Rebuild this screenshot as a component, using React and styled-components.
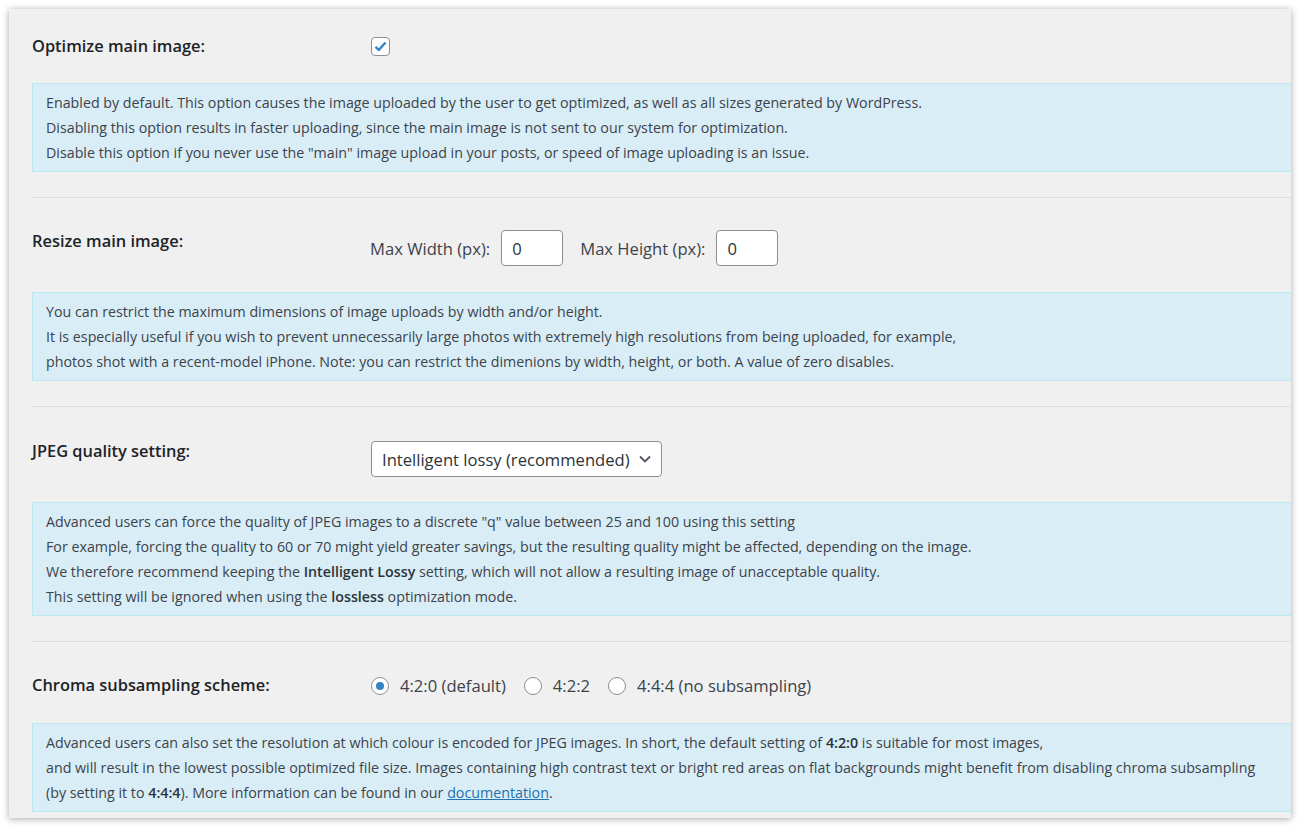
import React from 'react';
import styled, { createGlobalStyle } from 'styled-components';

const GlobalStyle = createGlobalStyle`
  html, body {
    margin: 0;
    background: #ffffff;
  }
  body {
    font-family: "Open Sans", "Noto Sans", sans-serif;
    color: #3c434a;
  }
  * {
    box-sizing: border-box;
  }
`;

const Page = styled.div`
  width: 1299px;
  height: 827px;
  padding: 9px 8px 9px 9px;
`;

const Panel = styled.div`
  height: 100%;
  background: #f0f0f1;
  box-shadow: 0 1px 7px rgba(0, 0, 0, 0.35);
  overflow: hidden;
  padding-left: 23px;
`;

const Section = styled.section`
  padding-top: ${({ $top = 32 }) => $top}px;
  padding-bottom: 25px;
  border-top: ${({ $first }) => ($first ? 'none' : '1px solid #dcdcde')};
  margin-right: -30px;
`;

const Row = styled.div`
  display: flex;
  align-items: flex-start;
`;

const Label = styled.div`
  width: 339px;
  flex-shrink: 0;
  font-size: 16.4px;
  font-weight: 600;
  line-height: 22px;
  color: #1d2327;
`;

const Controls = styled.div`
  display: flex;
  align-items: center;
  min-height: 22px;
  font-size: 16.6px;
  color: #3c434a;
`;

const FieldLabel = styled.span`
  margin-right: 11px;
  margin-left: -1px;
`;

const NumberInput = styled.input`
  width: 62px;
  height: 36px;
  padding: 0 10px;
  margin-right: 18px;
  border: 1px solid #8c8f94;
  border-radius: 4px;
  background: #fff;
  font: inherit;
  color: #2c3338;
  outline: 0;
`;

const CheckBox = styled.span`
  width: 19px;
  height: 19px;
  border: 1px solid #8c8f94;
  border-radius: 4px;
  background: #fff;
  display: flex;
  align-items: center;
  justify-content: center;
  margin-top: 1px;
`;

const SelectWrap = styled.div`
  position: relative;
  width: 291px;
  height: 36px;
  margin-top: 1px;
  border: 1px solid #8c8f94;
  border-radius: 4px;
  background: #fff;
  display: flex;
  align-items: center;
  padding-left: 10px;
  color: #2c3338;

  svg {
    position: absolute;
    right: 9px;
    top: 10px;
  }
`;

const RadioOption = styled.label`
  display: flex;
  align-items: center;
  margin-right: 18px;
  color: #3c434a;
`;

const Radio = styled.span`
  width: 18px;
  height: 18px;
  border-radius: 50%;
  border: 1px solid #8c8f94;
  background: #fff;
  margin-right: 11px;
  display: flex;
  align-items: center;
  justify-content: center;

  &::after {
    content: '';
    width: 8px;
    height: 8px;
    border-radius: 50%;
    background: ${({ $checked }) => ($checked ? '#3582c4' : 'transparent')};
  }
`;

const Info = styled.div`
  margin-top: ${({ $gap = 26 }) => $gap}px;
  padding: 6px 13px;
  background: #d9edf7;
  border: 1px solid #bce8f1;
  font-size: 14.25px;
  line-height: 25px;
  color: #3c434a;
  white-space: nowrap;

  b {
    font-weight: 600;
    color: #2c3338;
  }

  a {
    color: #2271b1;
    text-decoration: underline;
  }
`;

const Chevron = () => (
  <svg width="14" height="14" viewBox="0 0 14 14" fill="none">
    <path d="M2 4.5 7 9.5 12 4.5" stroke="#50575e" strokeWidth="1.9" />
  </svg>
);

const Check = () => (
  <svg width="15" height="15" viewBox="0 0 15 15" fill="none">
    <path d="M2.5 7.8 5.8 11 12.5 3.5" stroke="#3582c4" strokeWidth="2.4" strokeLinejoin="round" />
  </svg>
);

const App = () => {
  return (
    <Page>
      <GlobalStyle />
      <Panel>
        <Section $first $top={26}>
          <Row>
            <Label>Optimize main image:</Label>
            <Controls>
              <CheckBox role="checkbox" aria-checked="true">
                <Check />
              </CheckBox>
            </Controls>
          </Row>
          <Info>
            Enabled by default. This option causes the image uploaded by the user to get optimized, as well as all sizes generated by WordPress.
            <br />
            Disabling this option results in faster uploading, since the main image is not sent to our system for optimization.
            <br />
            Disable this option if you never use the "main" image upload in your posts, or speed of image uploading is an issue.
          </Info>
        </Section>

        <Section>
          <Row>
            <Label>Resize main image:</Label>
            <Controls>
              <FieldLabel>Max Width (px):</FieldLabel>
              <NumberInput defaultValue="0" />
              <FieldLabel>Max Height (px):</FieldLabel>
              <NumberInput defaultValue="0" />
            </Controls>
          </Row>
          <Info>
            You can restrict the maximum dimensions of image uploads by width and/or height.
            <br />
            It is especially useful if you wish to prevent unnecessarily large photos with extremely high resolutions from being uploaded, for example,
            <br />
            photos shot with a recent-model iPhone. Note: you can restrict the dimenions by width, height, or both. A value of zero disables.
          </Info>
        </Section>

        <Section $top={33}>
          <Row>
            <Label>JPEG quality setting:</Label>
            <Controls>
              <SelectWrap>
                Intelligent lossy (recommended)
                <Chevron />
              </SelectWrap>
            </Controls>
          </Row>
          <Info $gap={25}>
            Advanced users can force the quality of JPEG images to a discrete "q" value between 25 and 100 using this setting
            <br />
            For example, forcing the quality to 60 or 70 might yield greater savings, but the resulting quality might be affected, depending on the image.
            <br />
            We therefore recommend keeping the <b>Intelligent Lossy</b> setting, which will not allow a resulting image of unacceptable quality.
            <br />
            This setting will be ignored when using the <b>lossless</b> optimization mode.
          </Info>
        </Section>

        <Section>
          <Row>
            <Label>Chroma subsampling scheme:</Label>
            <Controls>
              <RadioOption>
                <Radio $checked />
                4:2:0 (default)
              </RadioOption>
              <RadioOption>
                <Radio />
                4:2:2
              </RadioOption>
              <RadioOption>
                <Radio />
                4:4:4 (no subsampling)
              </RadioOption>
            </Controls>
          </Row>
          <Info>
            Advanced users can also set the resolution at which colour is encoded for JPEG images. In short, the default setting of <b>4:2:0</b> is suitable for most images,
            <br />
            and will result in the lowest possible optimized file size. Images containing high contrast text or bright red areas on flat backgrounds might benefit from disabling chroma subsampling
            <br />
            (by setting it to <b>4:4:4</b>). More information can be found in our <a href="#docs">documentation</a>.
          </Info>
        </Section>
      </Panel>
    </Page>
  );
};

export default App;
